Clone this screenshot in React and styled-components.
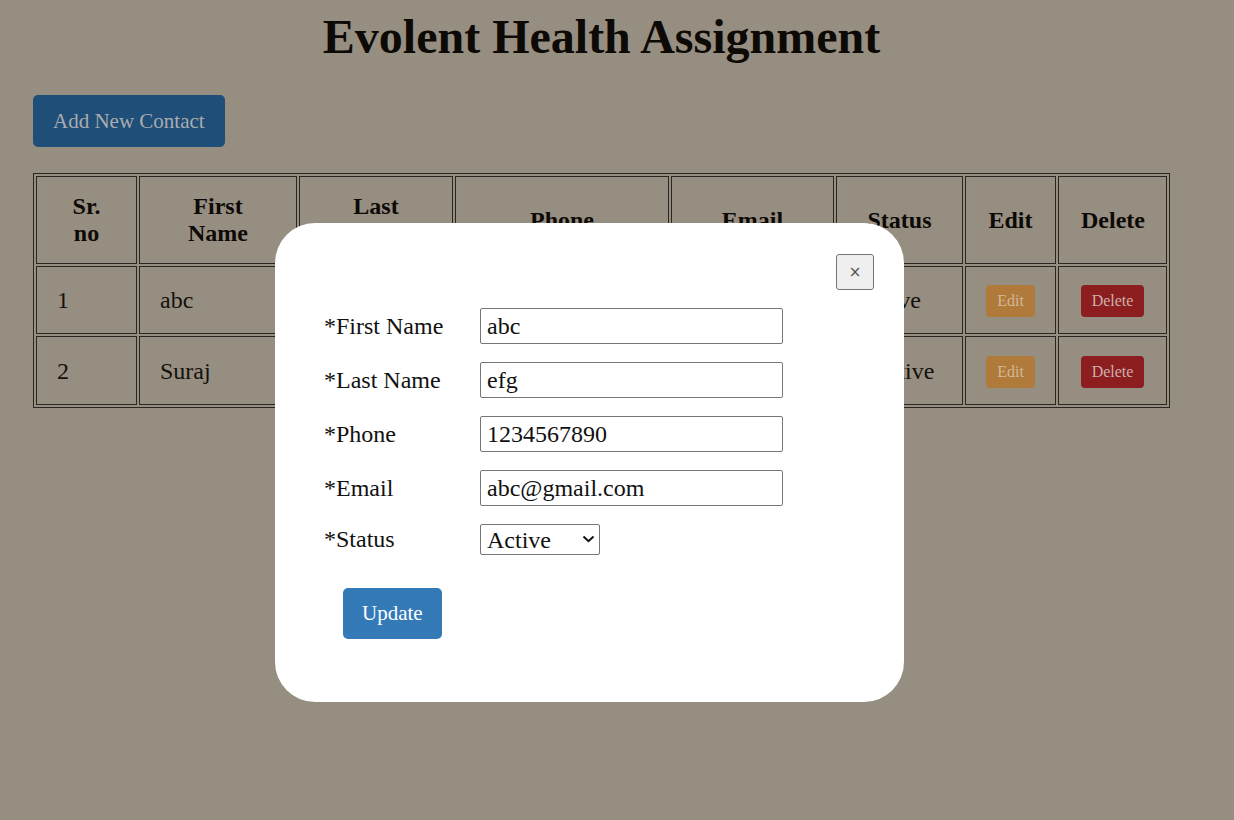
import React from 'react'
import styled, { createGlobalStyle } from 'styled-components'

const GlobalStyle = createGlobalStyle`
  body {
    margin: 0;
    background: #978e82;
    font-family: "Liberation Serif", "Times New Roman", serif;
    color: #15110c;
  }
`

const Container = styled.div`
  width: 1137px;
  margin-left: 33px;
  padding-bottom: 40px;
`
const Title = styled.h1`
  margin: 10px 0 0;
  font-size: 48px;
  line-height: 53px;
  text-align: center;
  color: #0d0a06;
`
const AddButton = styled.button`
  margin-top: 32px;
  padding: 14px 20px;
  font-family: inherit;
  font-size: 21px;
  line-height: 24px;
  background: #1f4e78;
  color: #a9acae;
  border: none;
  border-radius: 5px;
`
const Table = styled.table`
  margin-top: 26px;
  width: 1137px;
  table-layout: fixed;
  border: 1px solid #2a2622;
  border-spacing: 2px;
  font-size: 24px;
`
const Th = styled.th`
  border: 1px solid #2a2622;
  padding: 16px 22px;
  line-height: 27px;
  font-weight: bold;
  text-align: center;
  color: #0d0a06;
`
const Td = styled.td`
  border: 1px solid #2a2622;
  padding: 16px 20px;
  line-height: 32px;
  text-align: ${(p) => (p.center ? 'center' : 'left')};
  white-space: nowrap;
  overflow: hidden;
`
const SmallButton = styled.button`
  display: inline-block;
  vertical-align: middle;
  padding: 7px 11px;
  font-family: inherit;
  font-size: 16px;
  line-height: 18px;
  border: none;
  border-radius: 4px;
  background: ${(p) => (p.danger ? '#8c1e1f' : '#b07a3a')};
  color: ${(p) => (p.danger ? '#cdb0ac' : '#d2b896')};
`

const Overlay = styled.div`
  position: fixed;
  inset: 0;
`
const Modal = styled.div`
  position: absolute;
  left: 275px;
  top: 223px;
  width: 629px;
  height: 479px;
  box-sizing: border-box;
  padding: 31px 30px 0 49px;
  background: #fff;
  border-radius: 40px;
`
const ModalHeader = styled.div`
  display: flex;
  justify-content: flex-end;
`
const CloseButton = styled.button`
  width: 38px;
  height: 36px;
  padding: 0;
  background: #efefef;
  border: 1px solid #767676;
  border-radius: 3px;
  color: #555;
  font-family: "DejaVu Sans", sans-serif;
  font-size: 15px;
`
const Form = styled.form`
  margin-top: 18px;
  display: flex;
  flex-direction: column;
  gap: 18px;
`
const Row = styled.div`
  display: flex;
  align-items: center;
`
const Label = styled.label`
  width: 156px;
  font-size: 24px;
  color: #111;
`
const Input = styled.input`
  width: 303px;
  height: 36px;
  box-sizing: border-box;
  padding: 0 6px;
  font-family: inherit;
  font-size: 24px;
  color: #111;
  border: 1px solid #767676;
  border-radius: 2px;
  outline: none;
`
const SelectWrap = styled.div`
  position: relative;
  width: 120px;
  height: 31px;
`
const Select = styled.select`
  appearance: none;
  width: 120px;
  height: 31px;
  box-sizing: border-box;
  padding: 0 0 0 6px;
  font-family: inherit;
  font-size: 24px;
  color: #111;
  background: #fff;
  border: 1px solid #767676;
  border-radius: 2px;
`
const Chevron = styled.svg`
  position: absolute;
  right: 5px;
  top: 11px;
  pointer-events: none;
`
const UpdateButton = styled.button`
  align-self: flex-start;
  margin: 15px 0 0 19px;
  padding: 13px 19px;
  font-family: inherit;
  font-size: 21px;
  line-height: 25px;
  background: #337ab7;
  color: #fff;
  border: none;
  border-radius: 5px;
`

const contacts = [
  { id: 1, first: 'abc', last: 'efg', phone: '1234567890', email: 'abc@gmail.com', status: 'Active' },
  { id: 2, first: 'Suraj', last: 'Kumar', phone: '9876543210', email: 'suraj@gmail.com', status: 'Inactive' },
]

const widths = [101, 158, 154, 214, 163, 127, 91, 109]

const App = () => {
  return (
    <>
      <GlobalStyle />
      <Container>
        <Title>Evolent Health Assignment</Title>
        <AddButton>Add New Contact</AddButton>
        <Table>
          <colgroup>
            {widths.map((w, i) => (
              <col key={i} style={{ width: w }} />
            ))}
          </colgroup>
          <thead>
            <tr>
              <Th>Sr. no</Th>
              <Th>First Name</Th>
              <Th>Last Name</Th>
              <Th>Phone</Th>
              <Th>Email</Th>
              <Th>Status</Th>
              <Th>Edit</Th>
              <Th>Delete</Th>
            </tr>
          </thead>
          <tbody>
            {contacts.map((c) => (
              <tr key={c.id}>
                <Td>{c.id}</Td>
                <Td>{c.first}</Td>
                <Td>{c.last}</Td>
                <Td>{c.phone}</Td>
                <Td>{c.email}</Td>
                <Td>{c.status}</Td>
                <Td center>
                  <SmallButton>Edit</SmallButton>
                </Td>
                <Td center>
                  <SmallButton danger>Delete</SmallButton>
                </Td>
              </tr>
            ))}
          </tbody>
        </Table>
      </Container>

      <Overlay>
        <Modal>
          <ModalHeader>
            <CloseButton>×</CloseButton>
          </ModalHeader>
          <Form onSubmit={(e) => e.preventDefault()}>
            <Row>
              <Label>*First Name</Label>
              <Input defaultValue="abc" />
            </Row>
            <Row>
              <Label>*Last Name</Label>
              <Input defaultValue="efg" />
            </Row>
            <Row>
              <Label>*Phone</Label>
              <Input defaultValue="1234567890" />
            </Row>
            <Row>
              <Label>*Email</Label>
              <Input defaultValue="abc@gmail.com" />
            </Row>
            <Row>
              <Label>*Status</Label>
              <SelectWrap>
                <Select defaultValue="Active">
                  <option>Active</option>
                  <option>Inactive</option>
                </Select>
                <Chevron width="13" height="8" viewBox="0 0 13 8">
                  <path d="M1.5 1.5 L6.5 6.2 L11.5 1.5" fill="none" stroke="#111" strokeWidth="2" />
                </Chevron>
              </SelectWrap>
            </Row>
            <UpdateButton>Update</UpdateButton>
          </Form>
        </Modal>
      </Overlay>
    </>
  )
}

export default App
